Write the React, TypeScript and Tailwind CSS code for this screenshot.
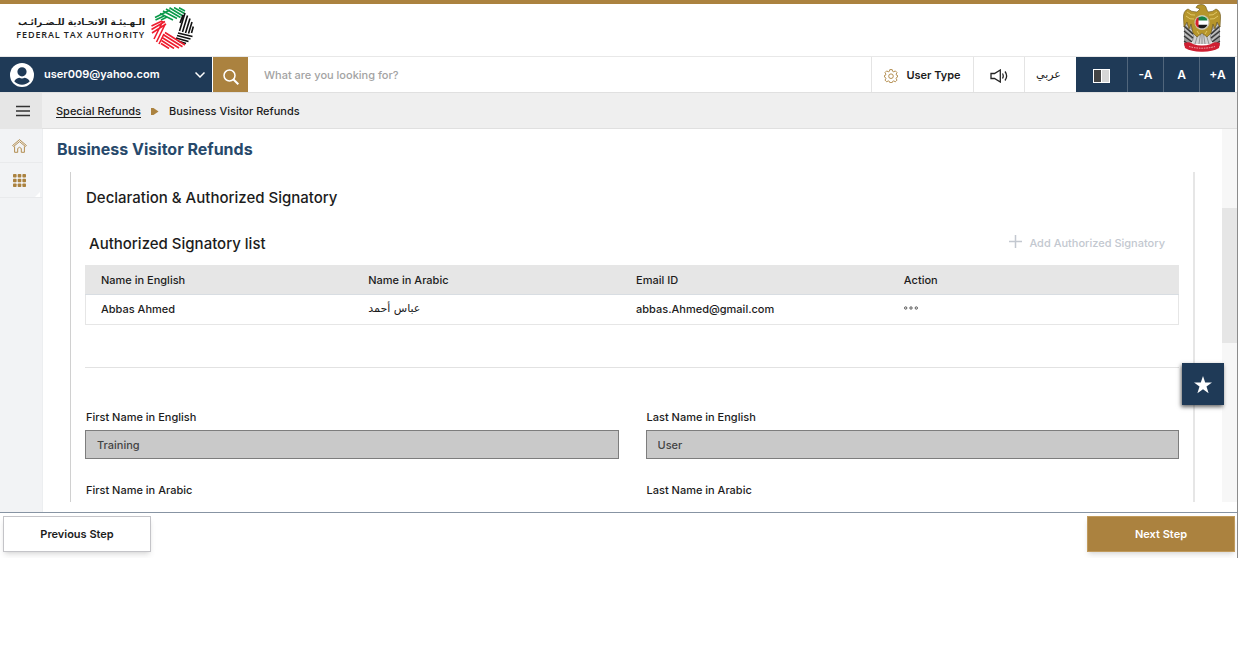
import React from 'react';

const GOLD = '#ab823f';

interface FieldProps {
  id: string;
  label: string;
  value?: string;
}

const columns = ['Name in English', 'Name in Arabic', 'Email ID', 'Action'];

const fontSizes = ['-A', 'A', '+A'];

const AuthorityMark = () => (
  <svg className="h-[42px] w-[43px]" viewBox="0 0 43 42" fill="none" strokeWidth="1.6" aria-hidden="true">
    <g stroke="#0a9a4a">
      <path d="M4 10.500 L19 3 M4.500 13 L13 9 M10 13 L16 10" />
      <path d="M9 6.500 L22 13 M12 4 L26 11.500 M15 2 L29.500 10.500 M18.500 0.800 L32 9 M23 0.500 L33.500 6.500 M28 0.800 L34 4" />
    </g>
    <g stroke="#111">
      <path d="M28.500 24 L34 6 M31.500 25 L36.500 8.500 M34.500 26 L39 11.500 M37.500 26.500 L41 15 M40.500 26 L42.300 19.500 M29 16 L32 8" />
      <path d="M27 26 L41.500 29.500 M26 28.500 L39.500 32 M25 31 L37.500 34.500 M27 34 L35 36.500" />
    </g>
    <g stroke="#ee1c2e">
      <path d="M0.500 19 L11 14 M0.500 22.500 L14 14.500 M1 26 L15 17 M3 32 L12 14 M5.500 35 L14.500 16.500 M8 37 L13 27" />
      <path d="M14 25.500 L34 38 M12 27.500 L31.500 39.800 M11 30.500 L28 41 M10.500 33.500 L23 41.500 M10 36.500 L18 41.500" />
    </g>
  </svg>
);

const Emblem = () => (
  <svg className="h-12 w-10" viewBox="0 0 40 48" aria-hidden="true">
    {/* outer wing feathers */}
    <path d="M2 15 L11 14 L13 36 L2 42 Z M38 15 L29 14 L27 36 L38 42 Z" fill="#9a9a9a" />
    <path d="M2 22 L11 30 M2 27 L11 34 M2 32 L10 38 M2 37 L8 41 M38 22 L29 30 M38 27 L29 34 M38 32 L30 38 M38 37 L32 41" stroke="#333" strokeWidth="1.2" />
    <path d="M3 20 L11 28 M37 20 L29 28 M3 25 L11 32 M37 25 L29 32 M3 30 L10 36 M37 30 L30 36" stroke="#ddd" strokeWidth="0.8" />
    {/* tail */}
    <path d="M14 28 L26 28 L30 40 L10 40 Z" fill="#d2d2d2" />
    <path d="M16 30 L13 40 M18.500 30 L17 40 M21.500 30 L23 40 M24 30 L27 40 M20 30 V40" stroke="#777" strokeWidth="0.7" />
    {/* wings, body and head */}
    <path d="M14 3.500 Q15 0.500 19 0.500 Q24 0.500 24.500 5 L26 8 Q31 8 34 5 Q39 7 38.500 14 L38 23 L35 18 L33 25 L31 20 L29 29 L25 33 L20 29 L15 33 L11 29 L9 20 L7 25 L5 18 L2 23 L1.500 14 Q1 7 6 5 Q9 8 15 8 L18 5 Z" fill="#b6952b" stroke="#665014" strokeWidth="0.6" />
    <path d="M5 8 Q9 12 13 11 M4 12 Q8 16 12 15 M35 8 Q31 12 27 11 M36 12 Q32 16 28 15 M15 27 L17 30 M25 27 L23 30" stroke="#e0c765" strokeWidth="1" fill="none" />
    {/* flag disc */}
    <circle cx="20" cy="18.500" r="7" fill="#fff" stroke="#c9c2a8" strokeWidth="1.2" />
    <path d="M15.500 14 Q20 10.500 24.500 14 L25.500 16.500 H14.500 Z" fill="#178044" />
    <path d="M14.500 20.800 H25.500 L24 23 Q20 26 16 23 Z" fill="#1b1b1b" />
    <path d="M16.500 13 V24 Q11.500 20.500 14.500 14.800 Z" fill="#d61f2c" />
    {/* ribbon */}
    <path d="M2 39 Q8 37 11 40 Q20 43 29 40 Q32 37 38 39 L37 44 Q30 48 20 47.800 Q10 48 3 44 Z" fill="#cf1f32" />
    <path d="M7 42.500 Q20 46 33 42.500" stroke="#f0b9be" strokeWidth="1" strokeDasharray="1.500 1" fill="none" />
  </svg>
);

const Header = () => (
  <header className="flex h-[53px] items-start justify-between border-b border-[#e8e8e8] pl-[17px] pr-[15px]">
    <a href="#" className="flex items-start gap-1.5 pt-[3px]">
      <span className="flex w-32 flex-col items-end pt-[9px]">
        <span lang="ar" dir="rtl" className="whitespace-nowrap font-['DejaVu_Sans',sans-serif] text-[9px] font-bold leading-[13px]">
          الـهـيئـة الاتحـادية للـضـرائـب
        </span>
        <span className="whitespace-nowrap font-['Open_Sans',sans-serif] text-[9px] font-semibold leading-[11px] tracking-widest text-[#222]">
          FEDERAL TAX AUTHORITY
        </span>
      </span>
      <AuthorityMark />
    </a>
    <Emblem />
  </header>
);

const NavBar = () => (
  <nav className="flex h-9 items-stretch border-b border-[#e0e0e0] pr-0.5">
    <button className="flex w-[212px] items-center bg-[#1f3a57] pl-[10px] pr-[7px] text-white">
      <svg className="h-6 w-6" viewBox="0 0 24 24" aria-hidden="true">
        <circle cx="12" cy="12" r="12" fill="#fff" />
        <path d="M12 4.2a4.6 4.6 0 1 1 0 9.2a4.6 4.6 0 0 1 0-9.2z M4.2 18.2c1.8-2.4 4-3.4 5.2-3.4c1.6.8 3.6.8 5.2 0c1.2 0 3.4 1 5.2 3.4c-4 4.6-11.600 4.600-15.600 0z" fill="#1f3a57" />
      </svg>
      <span className="ml-2.5 flex-1 text-left text-[11px] font-semibold">user009@yahoo.com</span>
      <svg className="h-[10px] w-[10px]" viewBox="0 0 10 10" fill="none" stroke="currentColor" strokeWidth="1.5" aria-hidden="true">
        <path d="M0.500 2.500 L5 7 L9.500 2.500" />
      </svg>
    </button>
    <button aria-label="Search" className="ml-px flex w-[35px] items-center justify-center bg-[#ab823f] pt-1 text-white">
      <svg className="h-4 w-4" viewBox="0 0 16 16" fill="none" stroke="currentColor" strokeWidth="1.500" aria-hidden="true">
        <circle cx="6.500" cy="6.500" r="5.500" />
        <path d="M10.500 10.500 L15.300 15.300" strokeWidth="2" />
      </svg>
    </button>
    <input
      type="search"
      aria-label="Search the portal"
      placeholder="What are you looking for?"
      className="min-w-0 flex-1 px-4 pt-0.5 text-[11px] font-medium outline-none placeholder:text-[#a3a3a3]"
    />
    <button className="flex w-[102px] items-center justify-center gap-2 border-l border-[#e4e4e4] pt-0.5 text-[11px] font-semibold">
      <svg className="h-[14px] w-[14px]" viewBox="0 0 14 14" fill="none" stroke={GOLD} aria-hidden="true">
        <path d="M5.800 0.600h2.400l.4 1.700 1.200.5 1.500-.9 1.700 1.700-.9 1.500.5 1.200 1 .2v1.500l-1 .4-.5 1.200.9 1.500-1.700 1.700-1.500-.9-1.200.5-.4 1.200H5.800l-.4-1.200-1.200-.5-1.500.9L1 11.100l.9-1.500-.5-1.200-1-.4V6.500l1-.2.5-1.200L1 3.600l1.700-1.700 1.500.9 1.200-.5z" strokeWidth="0.900" />
        <circle cx="7" cy="7.200" r="2.300" strokeWidth="0.900" />
      </svg>
      User Type
    </button>
    <button aria-label="Listen" className="flex w-[51px] items-center justify-center border-l border-[#e4e4e4] pt-0.5">
      <svg className="h-[14px] w-[18px]" viewBox="0 0 18 14" fill="none" stroke="#222" strokeWidth="1.300" aria-hidden="true">
        <path d="M1 4.500 H4.500 L10.300 1 V13 L4.500 9.500 H1 Z" />
        <path d="M12.500 4.500 Q14 7 12.500 9.500 M15 2.500 Q18.300 7 15 11.500" />
      </svg>
    </button>
    <button lang="ar" className="w-[52px] border-l border-[#e4e4e4] pr-1 pt-0.5 font-['DejaVu_Sans',sans-serif] text-[11px]">
      عربي
    </button>
    <button aria-label="Contrast" className="flex w-[51px] items-center justify-center bg-[#1f3a57] pt-0.5">
      <span className="flex h-[14px] w-[17px] border border-white bg-[#d6d6d6]">
        <span className="w-2 border-r border-white bg-[#444]" />
      </span>
    </button>
    {fontSizes.map((size) => (
      <button key={size} className="w-9 border-l border-[#51667c] bg-[#1f3a57] text-xs font-semibold text-white">
        {size}
      </button>
    ))}
  </nav>
);

const Breadcrumb = () => (
  <div className="flex h-9 items-stretch bg-[#efefef]">
    <button aria-label="Menu" className="flex w-[42px] items-center bg-[#e6e6e6] pl-4">
      <svg className="h-3 w-[14px]" viewBox="0 0 14 12" stroke="#333" strokeWidth="1.500" aria-hidden="true">
        <path d="M0 1.500 H14 M0 6 H14 M0 10.500 H14" />
      </svg>
    </button>
    <div className="flex flex-1 items-center border-b border-[#e0e0e0] pl-[14px] pt-0.5 text-[11px] font-medium">
      <a href="#" className="underline underline-offset-2">Special Refunds</a>
      <svg className="mx-2.5 h-[7px] w-2" viewBox="0 0 8 7" fill={GOLD} aria-hidden="true">
        <path d="M0 0 H2.500 L7.500 3.500 L2.500 7 H0 Z" />
      </svg>
      <span>Business Visitor Refunds</span>
    </div>
  </div>
);

const SideBar = () => (
  <aside className="flex w-[43px] shrink-0 flex-col border-r border-[#eceef0] bg-[#f2f3f5]">
    <a href="#" aria-label="Home" className="flex h-[34px] items-center border-b border-[#e9eaec] pl-3">
      <svg className="h-[14px] w-[15px]" viewBox="0 0 15 14" fill="none" stroke={GOLD} strokeWidth="0.900" aria-hidden="true">
        <path d="M0.600 6.500 L7.500 0.600 L14.400 6.500 L13.400 7.500 L7.500 2.600 L1.600 7.500 Z" />
        <path d="M2.600 7.500 V13.300 H5.700 V9.500 Q7.500 7 9.300 9.500 V13.300 H12.400 V7.500" />
      </svg>
    </a>
    <a href="#" aria-label="Services" className="flex h-[35px] items-center border-b border-[#e9eaec] pl-[13px]">
      <svg className="h-[13px] w-[13px]" viewBox="0 0 13 13" fill={GOLD} aria-hidden="true">
        {[0, 4.7, 9.4].map((y) => [0, 4.7, 9.4].map((x) => <rect key={`${x}-${y}`} x={x} y={y} width="3.600" height="3.600" rx="0.800" />))}
      </svg>
      <svg className="ml-auto mr-0.5 h-[5px] w-[5px] self-end" viewBox="0 0 5 5" fill="#fff" aria-hidden="true">
        <path d="M5 0 V5 H0 Z" />
      </svg>
    </a>
  </aside>
);

const SignatoryTable = () => (
  <table className="w-full table-fixed border-collapse border border-[#e6e6e6] text-left text-[11px] font-medium">
    <thead className="bg-[#e6e6e6]">
      <tr className="h-[29px] border-b border-[#d8dde2]">
        {columns.map((column) => (
          <th key={column} className="w-[24.5%] px-[15px] font-medium last:w-auto">{column}</th>
        ))}
      </tr>
    </thead>
    <tbody>
      <tr className="h-[30px]">
        <td className="px-[15px]">Abbas Ahmed</td>
        <td lang="ar" className="px-[15px] font-['DejaVu_Sans',sans-serif]">عباس أحمد</td>
        <td className="px-[15px]">abbas.Ahmed@gmail.com</td>
        <td className="px-[15px]">
          <button aria-label="Row actions" className="block pb-1">
            <svg className="h-1 w-[14px]" viewBox="0 0 14 4" fill="none" stroke="#333" strokeWidth="0.800" aria-hidden="true">
              <circle cx="1.700" cy="2" r="1.200" />
              <circle cx="7" cy="2" r="1.200" />
              <circle cx="12.300" cy="2" r="1.200" />
            </svg>
          </button>
        </td>
      </tr>
    </tbody>
  </table>
);

const Field: React.FC<FieldProps> = ({ id, label, value }) => (
  <div className="flex flex-col gap-1 text-[11px] font-medium">
    <label htmlFor={id} className="pl-px leading-[18px]">{label}</label>
    <input
      id={id}
      readOnly
      value={value ?? ''}
      className="h-[29px] w-full border border-[#7d7d7d] bg-[#c9c9c9] px-[11px] text-[#444] outline-none"
    />
  </div>
);

const Content = () => (
  <main className="flex h-[373px] min-w-0 flex-1">
    <div className="flex min-w-0 flex-1 flex-col pl-[14px]">
      <h1 className="pb-3 pt-[9px] text-base font-bold leading-[22px] text-[#27496b]">Business Visitor Refunds</h1>
      <section className="ml-[13px] mr-[27px] min-h-0 flex-1 overflow-hidden border-l border-r-2 border-l-[#d0d0d0] border-r-[#e6e6e6] px-[14px] pt-4">
        <h2 className="pl-px text-[15px] font-medium leading-5">Declaration &amp; Authorized Signatory</h2>
        <div className="mb-[11px] mt-[26px] flex items-center justify-between pl-1 pr-[14px]">
          <h3 className="text-[15px] font-medium leading-5">Authorized Signatory list</h3>
          <button disabled className="flex items-center gap-[7px] pb-0.5 text-[11px] font-medium text-[#c3c8d0]">
            <svg className="mb-1 h-[13px] w-[13px]" viewBox="0 0 13 13" stroke="currentColor" strokeWidth="1.500" aria-hidden="true">
              <path d="M6.500 0 V13 M0 6.500 H13" />
            </svg>
            Add Authorized Signatory
          </button>
        </div>
        <SignatoryTable />
        <hr className="mb-10 mt-[42px] border-[#e2e2e2]" />
        <div className="grid grid-cols-2 gap-x-[27px] gap-y-[22px]">
          <Field id="first-en" label="First Name in English" value="Training" />
          <Field id="last-en" label="Last Name in English" value="User" />
          <Field id="first-ar" label="First Name in Arabic" />
          <Field id="last-ar" label="Last Name in Arabic" />
        </div>
      </section>
    </div>
    <div className="w-[15px] bg-[#f7f7f7] pt-[79px]">
      <div className="h-[135px] bg-[#e6e6e6]" />
    </div>
  </main>
);

export default function App() {
  return (
    <div className="relative border-r border-[#8c8c8c] bg-white font-['Inter',sans-serif] text-[#1c1c1c]">
      <div className="h-1 bg-[#ab823f]" />
      <Header />
      <NavBar />
      <Breadcrumb />
      <div className="flex h-[383px]">
        <SideBar />
        <Content />
      </div>
      <footer className="flex items-start justify-between border-t border-[#8794a3] pb-[6px] pl-[3px] pr-0.5 pt-[3px] text-[11px] font-semibold">
        <button className="h-9 w-[148px] border border-[#c4c4c8] bg-white shadow-md">Previous Step</button>
        <button className="h-9 w-[148px] border border-[#c09a5c] bg-[#ab823f] text-white shadow-md">Next Step</button>
      </footer>
      <button
        aria-label="Favourites"
        className="absolute right-[13px] top-[363px] flex h-[42px] w-[42px] items-center justify-center bg-[#1f3a57] pt-0.5 shadow-[-1px_2px_4px_rgba(0,0,0,0.6)]"
      >
        <svg className="h-[18px] w-[18px]" viewBox="0 0 18 18" fill="#fff" aria-hidden="true">
          <path d="M9 0 L11.200 6.500 H18 L12.500 10.600 L14.600 17.300 L9 13.200 L3.400 17.300 L5.500 10.600 L0 6.500 H6.800 Z" />
        </svg>
      </button>
    </div>
  );
}
